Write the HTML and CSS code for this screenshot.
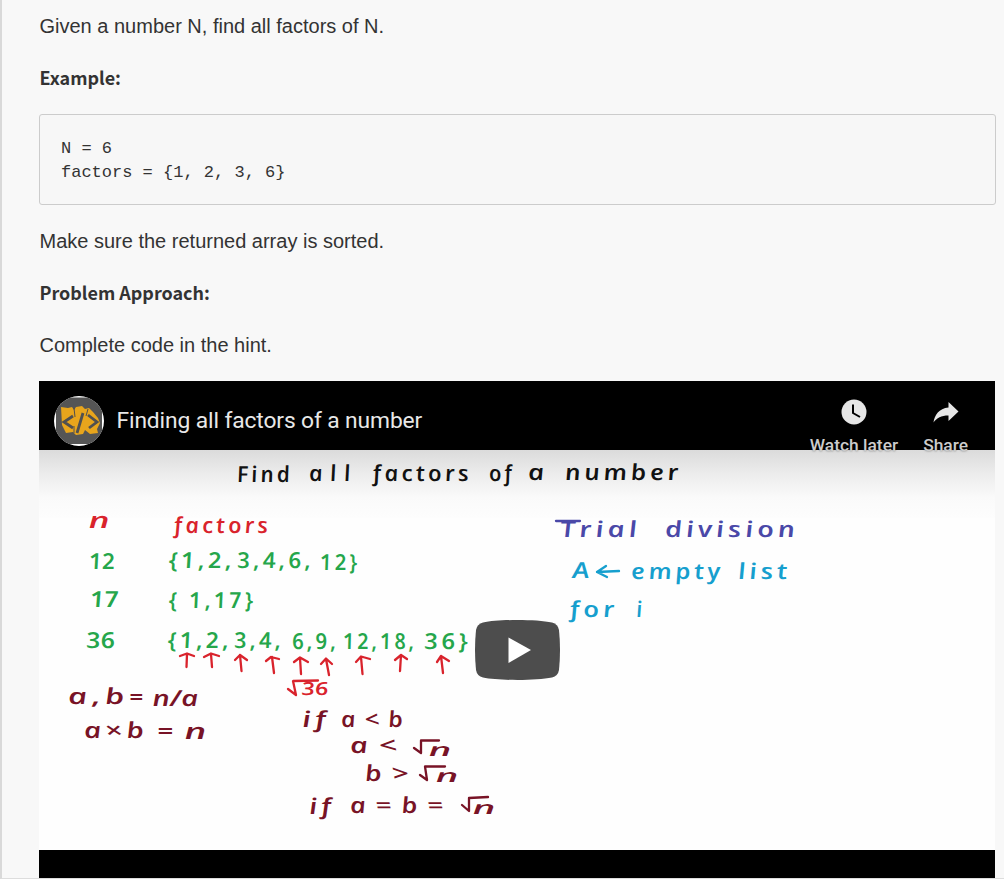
FILE: index.html
```html
<!DOCTYPE html>
<html lang="en">
<head>
<meta charset="utf-8">
<title>Finding all factors of a number</title>
<link rel="stylesheet" href="styles.css">
</head>
<body>
<main class="problem">
  <p class="line">Given a number N, find all factors of N.</p>
  <h2 class="heading">Example:</h2>
  <pre class="code">N = 6
factors = {1, 2, 3, 6}</pre>
  <p class="line">Make sure the returned array is sorted.</p>
  <h2 class="heading heading-approach">Problem Approach:</h2>
  <p class="line line-last">Complete code in the hint.</p>
  <section class="video">
    <header class="bar">
      <svg class="avatar" viewBox="0 0 50 50">
        <defs><clipPath id="disc"><circle cx="25" cy="25" r="25"/></clipPath></defs>
        <g clip-path="url(#disc)">
          <rect width="50" height="50" fill="#fff"/>
          <rect x="2" y="1.5" width="46" height="46.5" fill="#555"/>
          <path fill="#e8a51c" d="M7 11L14 12L18 11L20 14L22 11L28 10L31 13L35 12L39 16L44 22L46 27L43 33L44 37L36 38L31 34L29 38L22 39L19 36L12 37L8 29Z"/>
          <path fill="none" stroke="#505050" stroke-width="2.8" d="M19 20L10 26L19 32M29 17L23 37M34 19L43 26L35 32"/>
          <path fill="none" stroke="#505050" stroke-width="1" d="M20 12L21 21M34 13L32 20M20 30L20 37"/>
        </g>
      </svg>
      <div class="title">Finding all factors of a number</div>
      <div class="action">
        <svg class="icon" viewBox="0 0 36 36"><circle cx="18" cy="18" r="12.5" fill="#e6e6e6"/><path d="M17 10.5V19L24 23" fill="none" stroke="#000" stroke-width="2"/></svg>
        <span>Watch later</span>
      </div>
      <div class="action">
        <svg class="icon" viewBox="0 0 36 36"><path fill="#e6e6e6" d="M20.5 8L30.5 17.5L20.5 27V21.5C13 21.5 9 23.7 5.500 28.500C6.500 21 11 14.500 20.500 13.500Z"/></svg>
        <span>Share</span>
      </div>
    </header>
    <svg class="board" viewBox="39 450 956 400">
      <defs><linearGradient id="shade" x1="0" y1="0" x2="0" y2="1"><stop offset="0" stop-color="#dbdbdb"/><stop offset=".35" stop-color="#ececec"/><stop offset=".7" stop-color="#fafafa"/><stop offset="1" stop-color="#fdfdfd"/></linearGradient></defs>
      <rect x="39" y="450" width="956" height="400" fill="#fefefe"/>
      <rect x="39" y="450" width="956" height="68" fill="url(#shade)"/>
      <g class="ink black">
        <text transform="translate(238 482) skewX(10)" textLength="56" lengthAdjust="spacingAndGlyphs">Find</text>
        <text class="loose-word" transform="translate(310 481) skewX(10)" textLength="49" lengthAdjust="spacingAndGlyphs">all</text>
        <text transform="translate(374 481) skewX(10)" textLength="99" lengthAdjust="spacingAndGlyphs">factors</text>
        <text transform="translate(490 481) skewX(10)" textLength="26" lengthAdjust="spacingAndGlyphs">of</text>
        <text transform="translate(529 480) skewX(10)" textLength="20" lengthAdjust="spacingAndGlyphs">a</text>
        <text transform="translate(566 480) skewX(10)" textLength="117" lengthAdjust="spacingAndGlyphs">number</text>
      </g>
      <g class="ink red">
        <text class="tight" transform="translate(89 528) skewX(4)" textLength="21" lengthAdjust="spacingAndGlyphs">n</text>
        <text transform="translate(175 533) skewX(8)" textLength="97" lengthAdjust="spacingAndGlyphs">factors</text>
        <text class="tight small" transform="translate(302 695) skewX(8)" textLength="27" lengthAdjust="spacingAndGlyphs">36</text>
      </g>
      <g class="ink green">
        <text class="tight" transform="translate(90 569) skewX(10)" textLength="26" lengthAdjust="spacingAndGlyphs">12</text>
        <text class="tight" transform="translate(91 607) skewX(10)" textLength="29" lengthAdjust="spacingAndGlyphs">17</text>
        <text class="tight" transform="translate(87 648) skewX(10)" textLength="29" lengthAdjust="spacingAndGlyphs">36</text>
        <text transform="translate(170 568) skewX(10)" textLength="66" lengthAdjust="spacingAndGlyphs">{1,2,</text>
        <text transform="translate(238 568) skewX(10)" textLength="77" lengthAdjust="spacingAndGlyphs">3,4,6,</text>
        <text transform="translate(321 570) skewX(10)" textLength="40" lengthAdjust="spacingAndGlyphs">12}</text>
        <text transform="translate(170 608) skewX(10)" textLength="87" lengthAdjust="spacingAndGlyphs">{ 1,17}</text>
        <text transform="translate(169 648) skewX(10)" textLength="64" lengthAdjust="spacingAndGlyphs">{1,2,</text>
        <text transform="translate(235 648) skewX(10)" textLength="50" lengthAdjust="spacingAndGlyphs">3,4,</text>
        <text transform="translate(293 649) skewX(10)" textLength="47" lengthAdjust="spacingAndGlyphs">6,9,</text>
        <text transform="translate(344 649) skewX(10)" textLength="74" lengthAdjust="spacingAndGlyphs">12,18,</text>
        <text transform="translate(425 649) skewX(10)" textLength="47" lengthAdjust="spacingAndGlyphs">36}</text>
      </g>
      <g class="stroke" stroke="#d9232c">
        <path d="M180 656L187 653.500L194 656M187 654L186.500 667"/>
        <path d="M204 657L211 653.500L219 656M211 654L212 667"/>
        <path d="M235 660L240 655L247 660M240 655L241.500 671"/>
        <path d="M266 661L271 657L279 659M272 657L274 673"/>
        <path d="M294 662L300 657.500L308 662M300 658L301 674"/>
        <path d="M321 664L326 658.500L332 664M326 659L329 675"/>
        <path d="M356 662L361 656.500L370 659M361 657L362.500 674"/>
        <path d="M395 660L401 655L407 659M401 655L400 671"/>
        <path d="M437 662L441 656L449 661M441 656L443 673"/>
        <path d="M288 689L296 695L293 681L318 680.500"/>
      </g>
      <g class="ink maroon">
        <text transform="translate(69 704) skewX(10)" textLength="61" lengthAdjust="spacingAndGlyphs">a,b</text>
        <text class="tight" transform="translate(129 705)" textLength="14" lengthAdjust="spacingAndGlyphs">=</text>
        <text class="tight" transform="translate(153 706) skewX(6)" textLength="46" lengthAdjust="spacingAndGlyphs">n/a</text>
        <text transform="translate(85 738) skewX(10)" textLength="64" lengthAdjust="spacingAndGlyphs">a×b</text>
        <text class="tight" transform="translate(157 739)" textLength="16" lengthAdjust="spacingAndGlyphs">=</text>
        <text class="tight" transform="translate(185 739) skewX(6)" textLength="22" lengthAdjust="spacingAndGlyphs">n</text>
        <text transform="translate(303 727) skewX(8)" textLength="28" lengthAdjust="spacingAndGlyphs">if</text>
        <text class="loose" transform="translate(342 727) skewX(10)" textLength="71" lengthAdjust="spacingAndGlyphs">a&lt;b</text>
        <text class="loose" transform="translate(351 753) skewX(10)" textLength="58" lengthAdjust="spacingAndGlyphs">a&lt;</text>
        <text class="tight small" transform="translate(429 756) skewX(6)" textLength="23" lengthAdjust="spacingAndGlyphs">n</text>
        <text class="loose" transform="translate(366 781) skewX(10)" textLength="54" lengthAdjust="spacingAndGlyphs">b&gt;</text>
        <text class="tight small" transform="translate(436 782) skewX(6)" textLength="23" lengthAdjust="spacingAndGlyphs">n</text>
        <text transform="translate(310 814) skewX(8)" textLength="26" lengthAdjust="spacingAndGlyphs">if</text>
        <text class="loose" transform="translate(351 813) skewX(10)" textLength="103" lengthAdjust="spacingAndGlyphs">a=b=</text>
        <text class="tight small" transform="translate(473 814) skewX(6)" textLength="23" lengthAdjust="spacingAndGlyphs">n</text>
      </g>
      <g class="stroke" stroke="#781326">
        <path d="M414 748L421 753L421 740.500L439 740.500"/>
        <path d="M420 775L427 780L425 766.500L445 766.500"/>
        <path d="M462 805L469 811L469 798L488 797"/>
      </g>
      <g class="ink violet">
        <text transform="translate(561 537) skewX(10)" textLength="81" lengthAdjust="spacingAndGlyphs">Trial</text>
        <text transform="translate(666 537) skewX(10)" textLength="134" lengthAdjust="spacingAndGlyphs">division</text>
        <path class="stroke" stroke="#4a48a8" d="M556 521L580 521"/>
      </g>
      <g class="ink cyan">
        <text class="tight" transform="translate(573 578) skewX(8)" textLength="17" lengthAdjust="spacingAndGlyphs">A</text>
        <text transform="translate(632 579) skewX(10)" textLength="93" lengthAdjust="spacingAndGlyphs">empty</text>
        <text transform="translate(739 579) skewX(10)" textLength="53" lengthAdjust="spacingAndGlyphs">list</text>
        <text transform="translate(571 617) skewX(10)" textLength="48" lengthAdjust="spacingAndGlyphs">for</text>
        <text transform="translate(637 617) skewX(8)">i</text>
        <path class="stroke" stroke="#169fce" d="M606 566L597 572L607 577M597 572L619 571"/>
      </g>
    </svg>
    <svg class="play" viewBox="0 0 85 60"><path fill="#4d4d4d" d="M8 2.500C24-.8 61-.8 77 2.500Q83 4 84 10Q86 30 84 50Q83 56 77 57.500C61 60.800 24 60.800 8 57.500Q2 56 1 50Q-1 30 1 10Q2 4 8 2.500Z"/><path fill="#fff" d="M33.500 17.500L56 30L33.500 43Z"/></svg>
  </section>
</main>
</body>
</html>
```
FILE: styles.css
```css
* { box-sizing: border-box; }
body { margin: 0; background: #fff; overflow: hidden; }
.problem {
  height: 879px;
  padding: 11px 8px 0 37px;
  border-left: 2px solid #d9d9d9;
  border-bottom: 1px solid #ddd;
  background: #f8f8f8;
  color: #333;
  font-family: "Liberation Sans", Arial, sans-serif;
}
.line { margin: 0 0 21px; padding-left: .5px; font-size: 20px; line-height: 30px; }
.heading {
  margin: 0 0 22px;
  padding-left: .5px;
  font: 700 17.95px/30px "Noto Sans CJK SC", "Noto Sans", sans-serif;
}
.heading-approach { margin-bottom: 23px; }
.code {
  height: 91px;
  margin: 0 0 21px;
  padding: 22px 21px;
  border: 1px solid #ccc;
  border-radius: 3px;
  background: #f7f7f7;
  font: 17px/24px "Liberation Mono", monospace;
}
.line-last { margin-bottom: 21px; }
.video { position: relative; width: 956px; height: 497px; background: #000; }
.bar {
  position: relative;
  z-index: 1;
  display: flex;
  height: 69px;
  padding: 15px 27px 0 15px;
  font-family: Roboto, sans-serif;
  color: #e8e8e8;
}
.avatar { width: 50px; height: 50px; margin-right: 12.5px; }
.title { flex: 1; padding-top: 10px; font-size: 22.8px; line-height: 30px; letter-spacing: -.12px; white-space: nowrap; }
.action {
  display: flex;
  flex-direction: column;
  align-items: center;
  margin-left: 25px;
  font-size: 17.4px;
  font-weight: 500;
  line-height: 20px;
  white-space: nowrap;
  text-shadow: 0 0 2px rgba(0,0,0,.5);
}
.action span { color: #ccc; }
.icon { flex: none; width: 36px; height: 36px; margin: -2.5px 0 5.5px; }
.board { display: block; width: 956px; height: 400px; }
.ink { font: italic 600 22px "Open Sans", sans-serif; letter-spacing: 3px; }
.tight { letter-spacing: 0; }
.loose { letter-spacing: 8px; }
.loose-word { letter-spacing: 7px; }
.small { font-size: 18px; }
.stroke { fill: none; stroke-width: 2.3; stroke-linecap: round; stroke-linejoin: round; }
.black { fill: #111; }
.red { fill: #d9232c; }
.green { fill: #25a64b; }
.maroon { fill: #781326; }
.violet { fill: #4a48a8; }
.cyan { fill: #169fce; }
.play { position: absolute; left: 436px; top: 239px; width: 85px; height: 60px; }
```
